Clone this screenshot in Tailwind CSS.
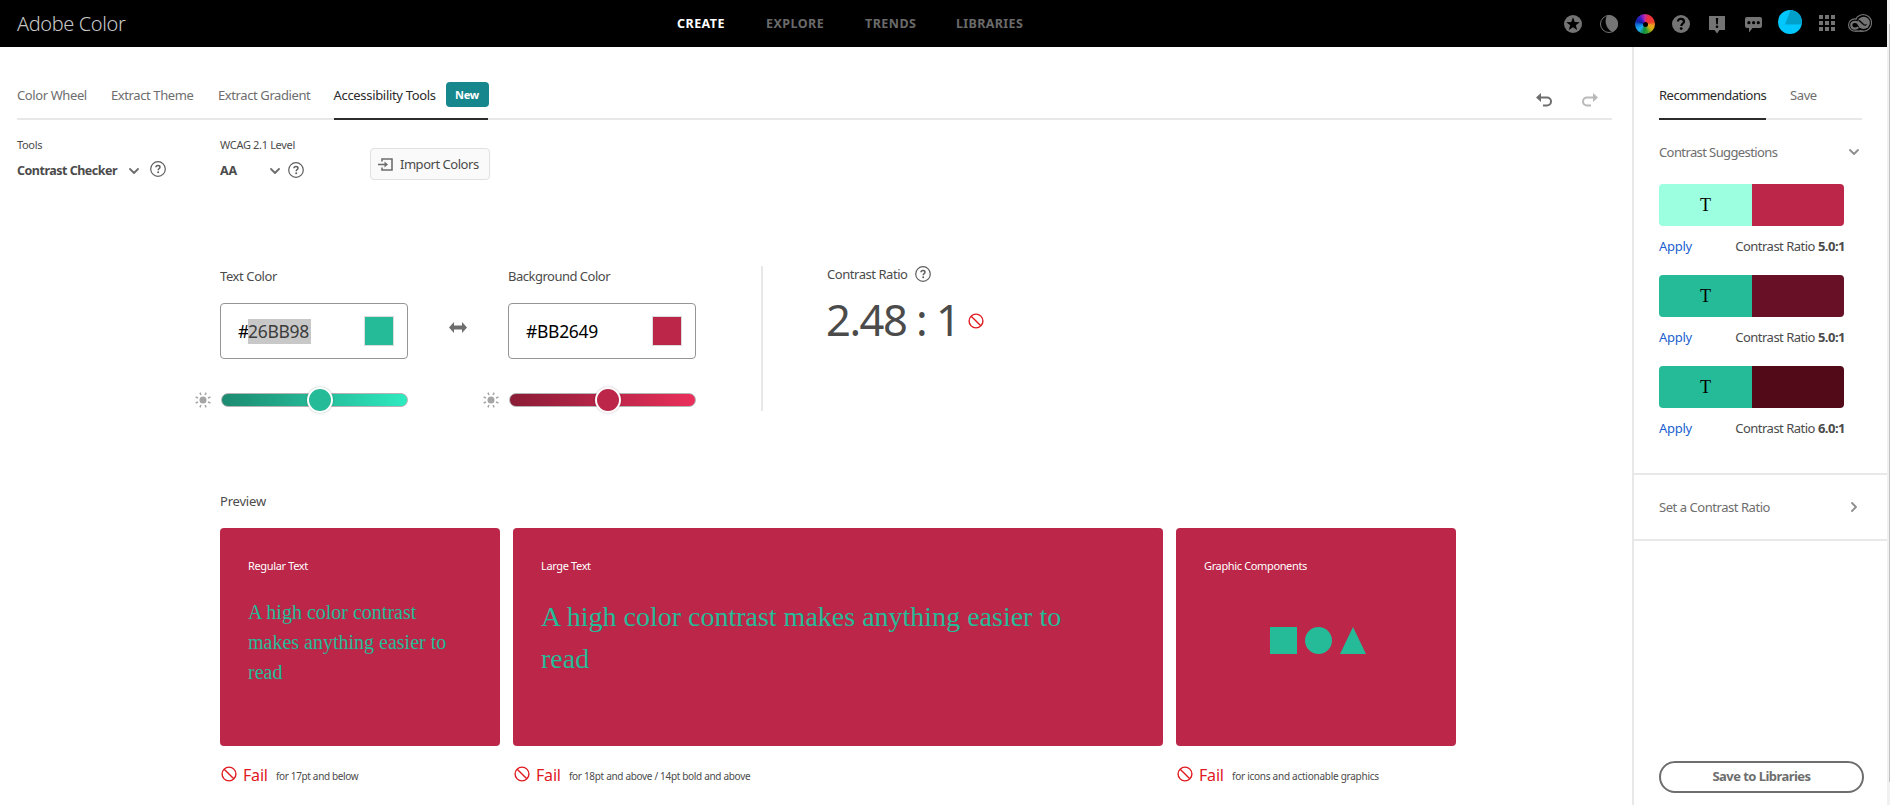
<!DOCTYPE html>
<html lang="en">
<head>
<meta charset="utf-8">
<title>Adobe Color</title>
<script src="https://cdn.jsdelivr.net/npm/@tailwindcss/browser@4"></script>
</head>
<body class="w-[1890px] h-[805px] overflow-hidden bg-white flex font-['Noto_Sans',sans-serif] text-[13px] leading-5 text-[#4b4b4b] whitespace-nowrap">
<svg class="hidden">
  <symbol id="help" viewBox="0 0 16 16"><circle cx="8" cy="8" r="7.3" fill="none" stroke="#5f5f5f" stroke-width="1.2"/><path d="M6 6.3C6 5.1 6.8 4.5 8 4.5s2 .7 2 1.7C10 7.500 8.300 7.600 8.200 9.200" fill="none" stroke="#5f5f5f" stroke-width="1.5"/><circle cx="8.200" cy="11.200" r="1" fill="#5f5f5f"/></symbol>
  <symbol id="chev" viewBox="0 0 10 6"><path d="M1 1l4 4 4-4" fill="none" stroke="currentColor" stroke-width="1.800" stroke-linecap="round" stroke-linejoin="round"/></symbol>
  <symbol id="ban" viewBox="0 0 16 16"><circle cx="8" cy="8" r="6.900" fill="none" stroke="#e0191f" stroke-width="1.400"/><path d="M3.200 3.200l9.600 9.600" stroke="#e0191f" stroke-width="1.400"/></symbol>
  <symbol id="sun" viewBox="0 0 16 16"><circle cx="8" cy="8" r="3.500" fill="#a5a5a5"/><path d="M8 0v2.600M8 13.400V16M0 8h2.600M13.400 8H16" stroke="#a5a5a5" stroke-width="1.500" transform="rotate(22.500 8 8)"/><path d="M8 0v2.600M8 13.400V16M0 8h2.600M13.400 8H16" stroke="#a5a5a5" stroke-width="1.500" transform="rotate(-22.500 8 8)"/></symbol>
</svg>

<div class="w-[1887px] h-full flex flex-col">
  <header class="h-[47px] shrink-0 bg-black flex items-center pl-[17px]">
    <div class="w-[660px] text-[20px] leading-[30px] font-light tracking-[-0.4px] text-[#c8c8c8]">Adobe Color</div>
    <nav class="flex font-bold text-[12.5px] tracking-[0.45px] text-[#6a6a6a]">
      <a class="w-[89px] text-white">CREATE</a><a class="w-[99px]">EXPLORE</a><a class="w-[91px]">TRENDS</a><a class="tracking-[0.35px]">LIBRARIES</a>
    </nav>
    <div class="ml-auto mr-[12px] flex items-center pt-px">
      <div class="w-9 flex justify-center"><svg class="size-[18px]" viewBox="0 0 18 18"><circle cx="9" cy="9" r="9" fill="#747474"/><path d="M9 2.300l1.750 4.700 5 .2-3.900 3.100 1.350 4.800L9 12.300l-4.200 2.800 1.350-4.800-3.900-3.100 5-.2z" fill="#000"/></svg></div>
      <div class="w-9 flex justify-center"><svg class="size-[18px]" viewBox="0 0 18 18"><circle cx="9" cy="9" r="8.500" fill="none" stroke="#747474"/><path d="M7 .4C11 -.4 18 2 18 9c0 4-3 7-5.500 8C7 14.500 3.500 7 7 .4z" fill="#747474"/></svg></div>
      <div class="w-9 flex justify-center"><div class="size-5 rounded-full flex items-center justify-center bg-[conic-gradient(#c83090,#f03040_30deg,#f04030_75deg,#f0a020_100deg,#d0b010_130deg,#30a030_165deg,#109040_190deg,#20b0f0_225deg,#1080e0_260deg,#1020a0_290deg,#3020c0_320deg,#a020c0_350deg,#c83090)]"><div class="size-[5px] rounded-full bg-black"></div></div></div>
      <div class="w-9 flex justify-center"><svg class="size-[18px]" viewBox="0 0 18 18"><circle cx="9" cy="9" r="9" fill="#747474"/><path d="M6 6.500C6 4.700 7.200 3.800 9 3.800s3 1 3 2.600C12 8.400 9.400 8.600 9.300 11" fill="none" stroke="#000" stroke-width="2.200"/><circle cx="9.200" cy="13.600" r="1.400" fill="#000"/></svg></div>
      <div class="w-9 flex justify-center pt-[2px]"><svg class="w-4 h-[18px]" viewBox="0 0 16 18"><path d="M0 0h16v14h-5.500L8 17.500 5.500 14H0z" fill="#747474"/><path d="M6.800 2h2.400l-.4 6.300H7.200z" fill="#000"/><circle cx="8" cy="10.700" r="1.300" fill="#000"/></svg></div>
      <div class="w-9 flex justify-center pt-[2px]"><svg class="w-[17px] h-4" viewBox="0 0 17 16"><path d="M2 0h13a2 2 0 012 2v7a2 2 0 01-2 2H7.500L4 15.500V11H2a2 2 0 01-2-2V2a2 2 0 012-2z" fill="#747474"/><g fill="#000"><circle cx="3.900" cy="5.700" r="1.600"/><circle cx="8.600" cy="5.700" r="1.600"/><circle cx="13.300" cy="5.700" r="1.600"/></g></svg></div>
      <div class="w-[38px] flex justify-center pb-[4px]"><svg class="size-6" viewBox="0 0 24 24"><circle cx="12" cy="12" r="12" fill="#00c8ff"/><path d="M12.500 0A12 12 0 0123.700 14.500H7z" fill="#00a0cb"/></svg></div>
      <div class="w-9 flex justify-center pb-[2px]"><div class="grid grid-cols-3 gap-[2px]"><i class="size-1 bg-[#747474]"></i><i class="size-1 bg-[#747474]"></i><i class="size-1 bg-[#747474]"></i><i class="size-1 bg-[#747474]"></i><i class="size-1 bg-[#747474]"></i><i class="size-1 bg-[#747474]"></i><i class="size-1 bg-[#747474]"></i><i class="size-1 bg-[#747474]"></i><i class="size-1 bg-[#747474]"></i></div></div>
      <div class="w-[30px] flex justify-center pb-[2px]"><svg class="w-6 h-[18px]" viewBox="0 0 24 18"><circle cx="15.200" cy="8.900" r="8.300" fill="none" stroke="#747474" stroke-width="1.200"/><circle cx="6.800" cy="11" r="6.200" fill="#000" stroke="#747474" stroke-width="1.200"/><circle cx="15.200" cy="8.900" r="7.500" fill="#000"/><path d="M6 10h6v6.500H7z" fill="#000"/><circle cx="15.600" cy="8.900" r="6.200" fill="#747474"/><path d="M7 17.200h8.500" stroke="#747474" stroke-width="1.200"/><path d="M14.500 13.400L9.800 8.900C7.600 7 3.300 7.700 3.300 11c0 2.200 1.700 3.600 3.800 3.600 1.500 0 2.300-.5 3.200-1.300" fill="none" stroke="#747474" stroke-width="2.200"/><path d="M10.500 6.300c1.500.3 2.500 1.500 4.800 4 .9.900 2.300 1 3.200.1" fill="none" stroke="#000" stroke-width="1.200"/></svg></div>
    </div>
  </header>

  <div class="flex-1 flex">
    <main class="w-[1632px]">
      <div class="ml-[17px] mr-[20px] h-[73px] border-b-2 border-[#e8e8e8] flex items-end text-[#6e6e6e]">
        <div class="w-[94px] pb-[13px] tracking-[-0.4px]">Color Wheel</div>
        <div class="w-[107px] pb-[13px] tracking-[-0.4px]">Extract Theme</div>
        <div class="w-[115.5px] pb-[13px] tracking-[-0.4px]">Extract Gradient</div>
        <div class="w-[154px] h-[38px] -mb-[2px] border-b-2 border-[#2c2c2c] flex justify-between text-[#2c2c2c]">
          <span class="pt-[3px] tracking-[-0.32px]">Accessibility Tools</span>
          <span class="w-[43px] h-[25px] rounded-[4px] bg-[#16878c] text-white font-bold text-[11px] leading-[26px] text-center tracking-[-0.2px] -mr-px">New</span>
        </div>
        <div class="ml-auto mr-[14px] mb-[10px] flex gap-[30px]">
          <svg class="w-4 h-[15px]" viewBox="0 0 16 15"><path d="M5 0L0 4.500 5 9z" fill="#6e6e6e"/><path d="M3 4.500h8a4 4 0 010 8H7" fill="none" stroke="#6e6e6e" stroke-width="2"/></svg>
          <svg class="w-4 h-[15px]" viewBox="0 0 16 15"><path d="M11 0l5 4.500L11 9z" fill="#b9b9b9"/><path d="M13 4.500H5a4 4 0 000 8h4" fill="none" stroke="#b9b9b9" stroke-width="2"/></svg>
        </div>
      </div>

      <div class="h-[144px] pl-[17px] flex items-start">
        <div class="w-[203px] pt-[17px]">
          <div class="text-[11px] leading-4 tracking-[-0.33px]">Tools</div>
          <div class="mt-[7px] flex items-center"><b class="w-[112px] pt-px text-[12.5px] tracking-[-0.5px]">Contrast Checker</b><svg class="w-[10px] h-[6px] text-[#6e6e6e]"><use href="#chev"/></svg><svg class="size-4 ml-[11px] -mt-[3px]"><use href="#help"/></svg></div>
        </div>
        <div class="w-[150px] pt-[17px]">
          <div class="text-[11px] leading-4 tracking-[-0.33px]">WCAG 2.1 Level</div>
          <div class="mt-[7px] flex items-center"><b class="w-[50px] pt-px text-[12.5px] tracking-[-0.2px]">AA</b><svg class="w-[10px] h-[6px] text-[#6e6e6e]"><use href="#chev"/></svg><svg class="size-4 ml-2 -mt-px"><use href="#help"/></svg></div>
        </div>
        <div class="mt-[28px] w-[120px] h-8 border border-[#e1e1e1] bg-[#fafafa] rounded-[4px] flex items-center pl-[7px] gap-[7px]">
          <svg class="w-[15px] h-[13px]" viewBox="0 0 15 13"><path d="M4 3.500V1h10v11H4V9.500" fill="none" stroke="#6e6e6e" stroke-width="1.600"/><path d="M0 6.500h7" stroke="#6e6e6e" stroke-width="1.600"/><path d="M6.500 3.500L10 6.500l-3.500 3z" fill="#6e6e6e"/></svg>
          <span class="tracking-[-0.47px]">Import Colors</span>
        </div>
      </div>

      <div class="h-[227px] pl-[195px] flex items-start">
        <div class="w-[213px] pt-[2px]">
          <div class="pl-[25px] tracking-[-0.4px]">Text Color</div>
          <div class="ml-[25px] mt-[17px] h-14 border border-[#959595] rounded-[4px] flex items-center justify-between pl-[17px] pr-[13px] text-[17.500px] leading-[25px] tracking-[-0.3px] text-black">
            <div class="flex">#<span class="bg-[#c8c8c8] text-[#3c3c3c] h-[25px] w-[63px] -ml-px">26BB98</span></div>
            <div class="size-[30px] border border-[#dcdcdc] bg-[#26bb98]"></div>
          </div>
          <div class="mt-[29px] h-6 flex items-center">
            <svg class="size-4"><use href="#sun"/></svg>
            <div class="ml-[10px] w-[187px] h-[14px] rounded-full border border-[#b4b4b4] bg-linear-to-r from-[#1c8a70] to-[#2eeac0] relative"><div class="absolute left-[85px] -top-[7px] size-[26px] rounded-full border-2 border-white bg-[#26bb98] shadow-[0_0_2px_rgba(0,0,0,.3)]"></div></div>
          </div>
        </div>
        <svg class="ml-[41px] mr-[16px] mt-[58px] w-[18px] h-[11px]" viewBox="0 0 18 11"><path d="M0 5.500L5 0v3.500h8V0l5 5.500L13 11V7.500H5V11z" fill="#6e6e6e"/></svg>
        <div class="w-[213px] pt-[2px]">
          <div class="pl-[25px] tracking-[-0.5px]">Background Color</div>
          <div class="ml-[25px] mt-[17px] h-14 border border-[#959595] rounded-[4px] flex items-center justify-between pl-[17px] pr-[13px] text-[17.500px] leading-[25px] tracking-[-0.3px] text-black">
            <div>#BB2649</div>
            <div class="size-[30px] border border-[#dcdcdc] bg-[#bb2649]"></div>
          </div>
          <div class="mt-[29px] h-6 flex items-center">
            <svg class="size-4"><use href="#sun"/></svg>
            <div class="ml-[10px] w-[187px] h-[14px] rounded-full border border-[#b4b4b4] bg-linear-to-r from-[#8a1c36] to-[#ea2f5b] relative"><div class="absolute left-[85px] -top-[7px] size-[26px] rounded-full border-2 border-white bg-[#bb2649] shadow-[0_0_2px_rgba(0,0,0,.3)]"></div></div>
          </div>
        </div>
        <div class="ml-[65px] mt-[2px] w-[2px] h-[145px] bg-[#e8e8e8]"></div>
        <div class="ml-[64px]">
          <div class="flex items-center gap-2"><span class="w-[80px] tracking-[-0.45px]">Contrast Ratio</span><svg class="size-4 -mt-px"><use href="#help"/></svg></div>
          <div class="mt-[10px] flex items-center h-[50px]"><span class="w-[142px] text-[43.500px] leading-[50px] tracking-[-1.5px] -ml-px">2.48 : 1</span><svg class="size-4 mt-[4px]"><use href="#ban"/></svg></div>
        </div>
      </div>

      <div class="pl-[220px]">
        <div class="tracking-[-0.2px]">Preview</div>
        <div class="mt-[17px] flex text-white text-[11px] leading-4 tracking-[-0.36px]">
          <div class="w-[280px] h-[218px] rounded-[4px] bg-[#bb2649] pl-7 pt-[30px]">Regular Text<p class="mt-[23px] font-['Liberation_Serif',serif] text-[20px] leading-[30px] tracking-normal text-[#26bb98]">A high color contrast<br>makes anything easier to<br>read</p></div>
          <div class="ml-[13px] w-[650px] h-[218px] rounded-[4px] bg-[#bb2649] pl-7 pt-[30px]">Large Text<p class="mt-[22px] font-['Liberation_Serif',serif] text-[28px] leading-[42px] tracking-normal text-[#26bb98]">A high color contrast makes anything easier to<br>read</p></div>
          <div class="ml-[13px] w-[280px] h-[218px] rounded-[4px] bg-[#bb2649] pl-7 pt-[30px]">Graphic Components
            <svg class="ml-[66px] mt-[53px] w-[97px] h-[27px]" viewBox="0 0 97 27" fill="#26bb98"><path d="M0 0h27v27H0z"/><circle cx="48.500" cy="13.500" r="13.500"/><path d="M83 0l13 27H70z"/></svg>
          </div>
        </div>
        <div class="mt-[15px] flex items-center leading-6">
          <div class="w-[293px] flex items-center pl-px"><svg class="size-4 -mt-[2px]"><use href="#ban"/></svg><span class="ml-[6px] w-[33px] text-[16px] tracking-[-0.2px] text-[#e0191f]">Fail</span><span class="text-[10px] tracking-[-0.35px] pt-[3px]">for 17pt and below</span></div>
          <div class="w-[663px] flex items-center pl-px"><svg class="size-4 -mt-[2px]"><use href="#ban"/></svg><span class="ml-[6px] w-[33px] text-[16px] tracking-[-0.2px] text-[#e0191f]">Fail</span><span class="text-[10px] tracking-[-0.32px] pt-[3px]">for 18pt and above / 14pt bold and above</span></div>
          <div class="flex items-center pl-px"><svg class="size-4 -mt-[2px]"><use href="#ban"/></svg><span class="ml-[6px] w-[33px] text-[16px] tracking-[-0.2px] text-[#e0191f]">Fail</span><span class="text-[10px] tracking-[-0.26px] pt-[3px]">for icons and actionable graphics</span></div>
        </div>
      </div>
    </main>

    <aside class="w-[255px] border-l-2 border-[#e8e8e8] flex flex-col">
      <div class="ml-[25px] w-[203px] h-[73px] border-b-2 border-[#e8e8e8] flex items-end text-[#6e6e6e]">
        <div class="w-[107px] pb-[13px] -mb-[2px] border-b-2 border-[#2c2c2c] text-[#2c2c2c] tracking-[-0.5px]">Recommendations</div>
        <div class="pl-6 pb-[13px] tracking-[-0.4px]">Save</div>
      </div>
      <div class="h-[353px] pl-[25px]">
        <div class="mt-[22px] w-[200px] flex items-center justify-between text-[#6e6e6e]"><span class="tracking-[-0.6px]">Contrast Suggestions</span><svg class="w-[10px] h-[6px] text-[#8e8e8e]"><use href="#chev"/></svg></div>
        <div class="mt-[22px] w-[185px] h-[42px] rounded-[4px] overflow-hidden flex font-['Liberation_Serif',serif] text-[18px] leading-[43px] text-black text-center"><div class="w-[93px] bg-[#9cffdf]">T</div><div class="flex-1 bg-[#bb2649]"></div></div>
        <div class="mt-[10px] w-[186px] flex justify-between tracking-[-0.5px]"><a class="text-[#1b5fd0] tracking-[-0.3px]">Apply</a><span>Contrast Ratio <b>5.0:1</b></span></div>
        <div class="mt-[19px] w-[185px] h-[42px] rounded-[4px] overflow-hidden flex font-['Liberation_Serif',serif] text-[18px] leading-[43px] text-black text-center"><div class="w-[93px] bg-[#26bb98]">T</div><div class="flex-1 bg-[#671026]"></div></div>
        <div class="mt-[10px] w-[186px] flex justify-between tracking-[-0.5px]"><a class="text-[#1b5fd0] tracking-[-0.3px]">Apply</a><span>Contrast Ratio <b>5.0:1</b></span></div>
        <div class="mt-[19px] w-[185px] h-[42px] rounded-[4px] overflow-hidden flex font-['Liberation_Serif',serif] text-[18px] leading-[43px] text-black text-center"><div class="w-[93px] bg-[#26bb98]">T</div><div class="flex-1 bg-[#520a19]"></div></div>
        <div class="mt-[10px] w-[186px] flex justify-between tracking-[-0.5px]"><a class="text-[#1b5fd0] tracking-[-0.3px]">Apply</a><span>Contrast Ratio <b>6.0:1</b></span></div>
      </div>
      <div class="h-[68px] border-y-2 border-[#e8e8e8] pl-[25px] pr-[28px] flex items-center justify-between text-[#6e6e6e]"><span class="tracking-[-0.45px]">Set a Contrast Ratio</span><svg class="w-[10px] h-[6px] text-[#8e8e8e] -rotate-90"><use href="#chev"/></svg></div>
      <div class="mt-auto ml-[25px] mb-3 w-[205px] h-8 rounded-full border-2 border-[#6e6e6e] text-[#6e6e6e] font-bold text-center leading-[27px] tracking-[-0.55px]">Save to Libraries</div>
    </aside>
  </div>
</div>
<div class="w-[3px] h-full bg-[#f1f1f1] flex flex-col items-end pt-6"><div class="w-px h-[758px] bg-[#c1c1c1]"></div></div>
</body>
</html>
